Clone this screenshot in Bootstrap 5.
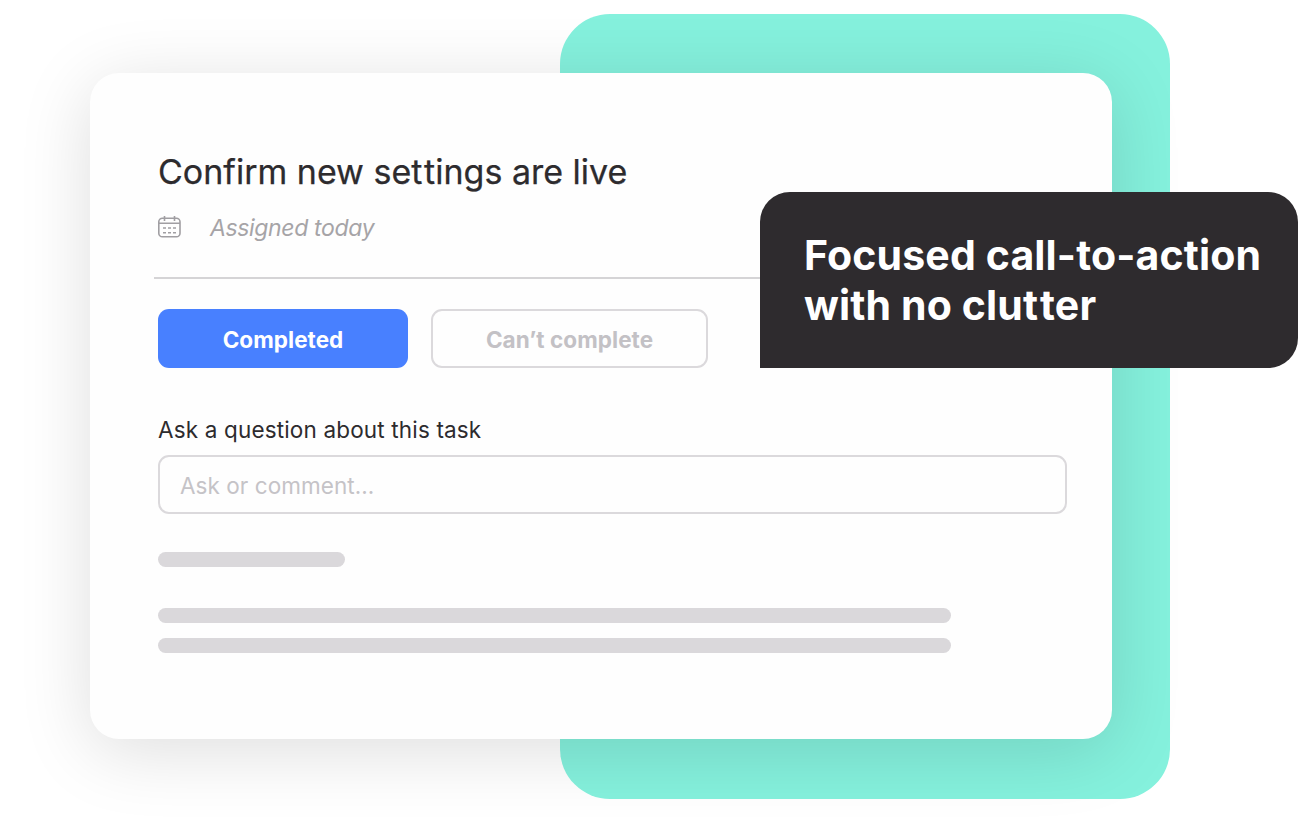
<!DOCTYPE html>
<html lang="en">
<head>
  <meta charset="UTF-8">
  <title>Confirm new settings are live</title>
  <meta name="viewport" content="width=device-width, initial-scale=1">
  <link href="https://cdn.jsdelivr.net/npm/bootstrap@5.3.3/dist/css/bootstrap.min.css" rel="stylesheet">
  <style>
    body {
      font-family: Inter, sans-serif;
      color: #2d2b2e;
      overflow: hidden;
    }
    .stage {
      width: 1298px;
      height: 839px;
      grid-template: 839px / 1298px;
    }
    /* backdrop and card share one grid cell */
    .stage > * {
      grid-area: 1 / 1;
    }
    .backdrop {
      width: 610px;
      height: 785px;
      margin: 14px 0 0 560px;
      border-radius: 50px;
      background: #85f1dd;
    }
    .task-card {
      width: 1022px;
      height: 666px;
      margin: 73px 0 0 90px;
      padding: 78px 45px 0 68px;
      border-radius: 29px;
      background: #fefefe;
      box-shadow: 0 12px 72px rgba(0, 0, 0, .135);
    }
    .task-title {
      font-size: 34px;
      line-height: 42px;
      letter-spacing: 0;
      font-weight: 400;
      -webkit-text-stroke: 0.25px;
    }
    /* opens up the tight double t */
    .tt {
      letter-spacing: 0.05em;
    }
    .assigned {
      margin-top: 20px;
      gap: 29px;
      height: 30px;
      font-size: 23px;
      line-height: 30px;
      letter-spacing: -0.35px;
      color: #a6a4a7;
    }
    .assigned svg {
      margin-top: -2px;
    }
    .divider {
      height: 2px;
      margin: 34px 0 30px -4px;
      background: #d5d4d6;
    }
    .task-actions {
      gap: 23px;
    }
    .task-actions .btn {
      height: 59px;
      padding: 2px 0 0;
      border-radius: 11px;
      font-size: 22.5px;
      letter-spacing: 0.05px;
      font-weight: 650;
    }
    .btn-done {
      width: 250px;
      background: #4880ff;
      color: #fff;
    }
    .btn-cant {
      width: 277px;
      border: 2px solid #dbd9dc;
      color: #c3c1c5;
    }
    .question {
      margin: 47px 0 10px;
      font-size: 22.5px;
      line-height: 30px;
      letter-spacing: 0.16px;
    }
    .task-card .form-control {
      width: 909px;
      height: 59px;
      padding: 1px 20px 0;
      border: 2px solid #dbd9dc;
      border-radius: 11px;
      background: transparent;
      font-size: 22.5px;
      letter-spacing: 0.06px;
    }
    .task-card .form-control::placeholder {
      color: #c5c3c7;
      opacity: 1;
    }
    .line {
      width: 793px;
      height: 15px;
      margin-bottom: 15px;
      background: #dad8db;
    }
    .line-short {
      width: 187px;
      margin: 38px 0 41px;
    }
    .callout {
      left: 760px;
      top: 192px;
      width: 538px;
      height: 176px;
      padding: 38px 0 0 44px;
      border-radius: 30px 30px 30px 0;
      background: #2e2b2e;
      color: #fff;
      font-size: 41px;
      line-height: 50px;
      letter-spacing: 0.14px;
      font-weight: 700;
    }
  </style>
</head>
<body class="bg-white">
  <div class="stage d-grid position-relative">
    <div class="backdrop"></div>
    <main class="task-card">
      <h1 class="task-title mb-0">Confirm new se<span class="tt">t</span>tings are live</h1>
      <div class="assigned d-flex align-items-center">
        <svg width="23" height="24" viewBox="0 0 23 24" fill="none" stroke="#a09ea2" stroke-width="1.6">
          <rect x=".8" y="3.2" width="21.2" height="18.6" rx="3.6"/>
          <path d="M1 8.2h21M6.5 1v5M16.5 1v5"/>
          <path d="M5 13h3M10 13h3M15 13h3M5 17.8h3M10 17.8h3M15 17.8h3"/>
        </svg>
        <em>Assigned today</em>
      </div>
      <div class="divider"></div>
      <div class="task-actions d-flex">
        <button type="button" class="btn btn-done">Completed</button>
        <button type="button" class="btn btn-cant">Can’t complete</button>
      </div>
      <label for="question" class="question d-block">Ask a question about this task</label>
      <input type="text" class="form-control" id="question" placeholder="Ask or comment...">
      <div class="line line-short rounded-pill"></div>
      <div class="line rounded-pill"></div>
      <div class="line rounded-pill"></div>
    </main>
    <div class="callout position-absolute">Focused call-to-action<br>with no clu<span class="tt">t</span>ter</div>
  </div>
  <script src="https://cdn.jsdelivr.net/npm/bootstrap@5.3.3/dist/js/bootstrap.bundle.min.js"></script>
</body>
</html>
